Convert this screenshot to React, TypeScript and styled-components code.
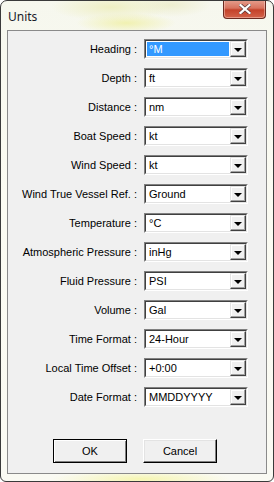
import React from 'react';
import styled, { createGlobalStyle } from 'styled-components';

const GlobalStyle = createGlobalStyle`
    html, body {
        margin:0;
        padding:0;
        background:#ffffff;
    }
    body {
        font-family:"Liberation Sans", Arial, sans-serif;
    }
`;

const Window = styled.div`
    width:274px;
    height:482px;
    box-sizing:border-box;
    border:1px solid #3a3a3a;
    border-radius:7px 7px 6px 6px;
    background:
        radial-gradient(ellipse 60px 14px at 110px 6px, rgba(238,238,190,0.9), transparent),
        radial-gradient(ellipse 50px 10px at 125px 22px, rgba(240,240,170,0.9), transparent),
        radial-gradient(ellipse 40px 12px at 170px 4px, rgba(235,235,200,0.8), transparent),
        radial-gradient(ellipse 90px 8px at 140px 478px, rgba(245,245,170,0.9), transparent),
        linear-gradient(180deg, #f6f7ee 0%, #fbfbf2 40%, #fafaf3 100%);
    display:flex;
    flex-direction:column;
    overflow:hidden;
`;

const TitleBar = styled.div`
    height:29px;
    display:flex;
    flex-direction:row;
    justify-content:space-between;
    align-items:flex-start;
    padding-left:7px;
    flex-shrink:0;
`;

const Title = styled.div`
    font-family:"Noto Sans", "Liberation Sans", sans-serif;
    font-size:12px;
    color:#1a1a2a;
    padding-top:7px;
`;

const CloseButton = styled.div`
    width:43px;
    height:19px;
    margin-right:7px;
    margin-top:-1px;
    box-sizing:border-box;
    border:1px solid #6b2a20;
    border-top:none;
    border-radius:0 0 4px 4px;
    background:linear-gradient(180deg, #e6a08f 0%, #d8735e 45%, #c4422a 55%, #d3634a 100%);
    box-shadow:inset 0 0 0 1px rgba(255,220,210,0.45);
    display:flex;
    align-items:center;
    justify-content:center;
`;

const ClientArea = styled.div`
    margin:0 6px 7px 6px;
    flex:1;
    box-sizing:border-box;
    border:1px solid #8a8a8a;
    background:#f0f0f0;
    display:flex;
    flex-direction:column;
    padding-top:8px;
`;

const FormGrid = styled.div`
    display:grid;
    grid-template-columns:129px 104px;
    column-gap:7px;
    row-gap:9px;
`;

const Label = styled.div`
    font-size:11px;
    color:#000;
    text-align:right;
    height:20px;
    line-height:20px;
    white-space:nowrap;
`;

const Combo = styled.div`
    height:20px;
    box-sizing:border-box;
    border-style:solid;
    border-width:1px;
    border-color:#808080 #ffffff #ffffff #808080;
    display:flex;
    flex-direction:row;
`;

const ComboInner = styled.div`
    flex:1;
    display:flex;
    border-style:solid;
    border-width:1px;
    border-color:#404040 #e3e3e3 #e3e3e3 #404040;
    background:#fff;
`;

const ComboText = styled.div<{ $selected?: boolean }>`
    flex:1;
    margin:1px;
    padding-left:2px;
    font-size:11px;
    line-height:14px;
    color:${p => (p.$selected ? '#ffffff' : '#000000')};
    background:${p => (p.$selected ? '#3399ff' : 'transparent')};
`;

const DropButton = styled.div`
    width:16px;
    box-sizing:border-box;
    border-style:solid;
    border-width:1px;
    border-color:#e3e3e3 #404040 #404040 #e3e3e3;
    box-shadow:inset -1px -1px 0 #a0a0a0, inset 1px 1px 0 #ffffff;
    background:#f0f0f0;
    display:flex;
    align-items:center;
    justify-content:center;
`;

const Arrow = styled.div`
    width:0;
    height:0;
    border-left:4px solid transparent;
    border-right:4px solid transparent;
    border-top:4px solid #000;
    margin-top:1px;
`;

const ButtonRow = styled.div`
    display:flex;
    flex-direction:row;
    gap:16px;
    padding-left:45px;
    margin-top:32px;
`;

const PushButton = styled.div<{ $default?: boolean }>`
    width:74px;
    height:24px;
    box-sizing:border-box;
    border:1px solid ${p => (p.$default ? '#000' : '#fff')};
    border-right-color:#000;
    border-bottom-color:#000;
    box-shadow:${p => (p.$default
        ? 'inset 1px 1px 0 #ffffff, inset -1px -1px 0 #808080'
        : 'inset -1px -1px 0 #808080, inset 1px 1px 0 #e3e3e3')};
    background:#f0f0f0;
    font-size:11px;
    color:#000;
    display:flex;
    align-items:center;
    justify-content:center;
`;

const rows = [
    { field: 'Heading', val: '°M', selected: true },
    { field: 'Depth', val: 'ft' },
    { field: 'Distance', val: 'nm' },
    { field: 'Boat Speed', val: 'kt' },
    { field: 'Wind Speed', val: 'kt' },
    { field: 'Wind True Vessel Ref.', val: 'Ground' },
    { field: 'Temperature', val: '°C' },
    { field: 'Atmospheric Pressure', val: 'inHg' },
    { field: 'Fluid Pressure', val: 'PSI' },
    { field: 'Volume', val: 'Gal' },
    { field: 'Time Format', val: '24-Hour' },
    { field: 'Local Time Offset', val: '+0:00' },
    { field: 'Date Format', val: 'MMDDYYYY' },
];

const App: React.FC = () => {
    return (
        <>
            <GlobalStyle />
            <Window>
                <TitleBar>
                    <Title>Units</Title>
                    <CloseButton>
                        <svg width="12" height="10" viewBox="0 0 12 10">
                            <path d="M1.5 1 L10.5 9 M10.5 1 L1.5 9" stroke="#5a3a3a" strokeWidth="3.6" strokeLinecap="square" />
                            <path d="M1.5 1 L10.5 9 M10.5 1 L1.5 9" stroke="#ffffff" strokeWidth="2.2" strokeLinecap="square" />
                        </svg>
                    </CloseButton>
                </TitleBar>

                <ClientArea>
                    <FormGrid>
                        {rows.map((item, index) => (
                            <React.Fragment key={index}>
                                <Label>{item.field} :</Label>
                                <Combo>
                                    <ComboInner>
                                        <ComboText $selected={item.selected}>{item.val}</ComboText>
                                        <DropButton><Arrow /></DropButton>
                                    </ComboInner>
                                </Combo>
                            </React.Fragment>
                        ))}
                    </FormGrid>

                    <ButtonRow>
                        <PushButton $default>OK</PushButton>
                        <PushButton>Cancel</PushButton>
                    </ButtonRow>
                </ClientArea>
            </Window>
        </>
    );
};

export default App;
